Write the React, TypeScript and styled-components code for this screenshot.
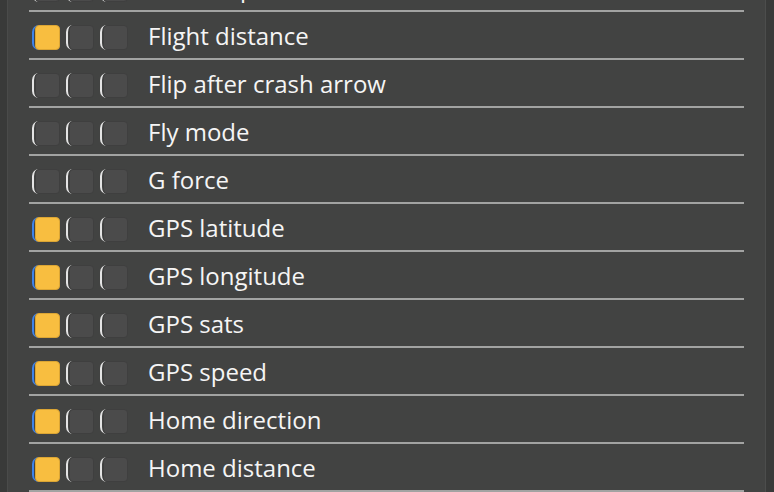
import React from "react";
import styled, { createGlobalStyle } from "styled-components";

const Global = createGlobalStyle`
  html, body { margin: 0; padding: 0; background: #424342; }
  body { font-family: "Open Sans", "DejaVu Sans", sans-serif; }
`;

const Page = styled.div`
  display: flex;
  width: 774px;
  height: 492px;
  overflow: hidden;
  background: #424342;
`;

const Gutter = styled.div<{ $side: "left" | "right" }>`
  flex: 0 0 ${(p) => (p.$side === "left" ? "7px" : "8px")};
  background: #393a39;
  ${(p) =>
    p.$side === "left"
      ? "border-right: 1px solid #4a4b4a;"
      : "border-left: 1px solid #4c4d4c;"}
`;

const Main = styled.div`
  flex: 1;
  overflow: hidden;
  padding: 0 21px 0 21px;
`;

const List = styled.ul`
  list-style: none;
  margin: -36px 0 0 0;
  padding: 0;
`;

const Row = styled.li`
  display: flex;
  align-items: center;
  height: 46px;
  padding-left: 3px;
  border-bottom: 2px solid #a2a3a2;
`;

const Switches = styled.div`
  display: flex;
  gap: 6px;
  margin-top: 5px;
  margin-right: 20px;
`;

const Toggle = styled.span<{ $on: boolean }>`
  display: flex;
  width: 28px;
  height: 25px;
  box-sizing: border-box;
  border-left: 2px solid ${(p) => (p.$on ? "#3d83ea" : "#e4e4e4")};
  border-radius: 7px 0 0 7px;
`;

const Box = styled.span<{ $on: boolean }>`
  display: block;
  margin-left: 1px;
  width: 25px;
  height: 25px;
  box-sizing: border-box;
  border-radius: 4px;
  background: ${(p) => (p.$on ? "#f8be40" : "#4b4b4b")};
  border: 1px solid ${(p) => (p.$on ? "#dba534" : "#3f3f3f")};
`;

const Label = styled.span`
  color: #f5f5f5;
  font-size: 24px;
  line-height: normal;
  white-space: nowrap;
  margin-top: 1px;
`;

const items: [string, boolean][] = [
  ["ESC temperature", false],
  ["Flight distance", true],
  ["Flip after crash arrow", false],
  ["Fly mode", false],
  ["G force", false],
  ["GPS latitude", true],
  ["GPS longitude", true],
  ["GPS sats", true],
  ["GPS speed", true],
  ["Home direction", true],
  ["Home distance", true],
  ["Horizon sidebars", false],
];

export default function App() {
  return (
    <>
      <Global />
      <Page>
        <Gutter $side="left" />
        <Main>
          <List>
            {items.map(([name, on]) => (
              <Row key={name}>
                <Switches>
                  {[on, false, false].map((v, i) => (
                    <Toggle key={i} $on={v}>
                      <Box $on={v} />
                    </Toggle>
                  ))}
                </Switches>
                <Label>{name}</Label>
              </Row>
            ))}
          </List>
        </Main>
        <Gutter $side="right" />
      </Page>
    </>
  );
}
